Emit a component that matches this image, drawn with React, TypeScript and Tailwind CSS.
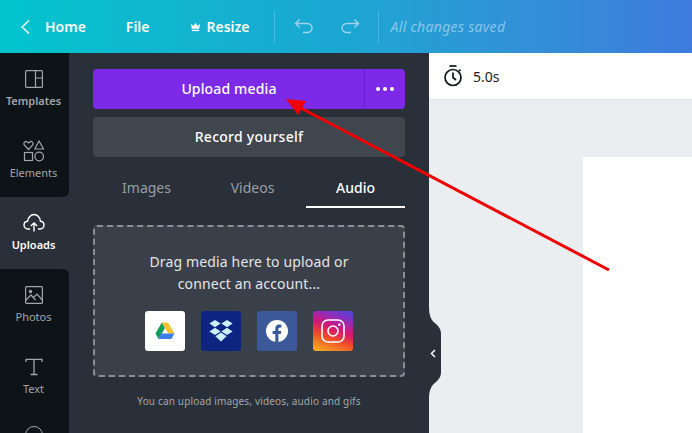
import { ReactNode } from "react";

const font = { fontFamily: '"Noto Sans", "Open Sans", sans-serif' };

function SideItem({ label, icon, active, className }: { label: string; icon: ReactNode; active?: boolean; className?: string }) {
  return (
    <div
      className={`h-[72px] w-[69px] shrink-0 flex flex-col items-center pr-[2px] ${
        active ? "bg-[#293039] text-white font-semibold" : "text-[#a3a6a9]"
      } ${className ?? "pt-[15px]"}`}
    >
      <div className="h-[22px] w-[24px] flex items-center justify-center">{icon}</div>
      <span className="text-[11px] leading-[16px] mt-[3px]">{label}</span>
    </div>
  );
}

function Tab({ label, active, width }: { label: string; active?: boolean; width: string }) {
  return (
    <div
      className={`${width} h-[39px] flex items-center justify-center text-[14px] ${
        active ? "pb-[1px] text-white font-medium border-b-2 border-white" : "pb-[3px] text-[#9a9ea4]"
      }`}
    >
      {label}
    </div>
  );
}

export default function App() {
  return (
    <div className="relative w-[692px] h-[433px] overflow-hidden bg-[#ebeef1]" style={font}>
      {/* top bar */}
      <header className="h-[53px] flex items-center text-white text-[14px] font-semibold bg-gradient-to-r from-[#01c4cc] via-[#1ba6d2] to-[#3d7bdc]">
        <svg className="ml-[20px]" width="11" height="16" viewBox="0 0 11 16" fill="none" stroke="white" strokeWidth="1.4">
          <path d="M9 1.5 L2 8 L9 14.5" />
        </svg>
        <span className="ml-[14px]">Home</span>
        <span className="ml-[40px]">File</span>
        <svg className="ml-[40px]" width="11" height="10" viewBox="0 0 12 10" fill="white">
          <path d="M1 1.5 L3.5 4 L6 0.5 L8.5 4 L11 1.5 L10 7 H2 Z" />
          <rect x="2" y="8" width="8" height="1.5" />
        </svg>
        <span className="ml-[6px]">Resize</span>
        <div className="ml-[24px] w-px h-[32px] bg-white/20" />
        <svg className="ml-[19px]" width="20" height="18" viewBox="0 0 20 18" fill="none" stroke="#9fd3ec" strokeWidth="1.4">
          <path d="M5.5 1.5 L1.5 5.5 L5.5 9.5 M1.5 5.5 H13 C16 5.5 18 7.5 18 10 C18 12.5 16 14.5 13 14.5 H9" />
        </svg>
        <svg className="ml-[26px]" width="20" height="18" viewBox="0 0 20 18" fill="none" stroke="#9fd3ec" strokeWidth="1.4">
          <path d="M14.5 1.5 L18.5 5.5 L14.5 9.5 M18.5 5.5 H7 C4 5.5 2 7.5 2 10 C2 12.5 4 14.5 7 14.5 H11" />
        </svg>
        <div className="ml-[18px] w-px h-[32px] bg-white/20" />
        <span className="ml-[12px] text-[14px] font-normal italic tracking-[0.3px] text-white/45">All changes saved</span>
      </header>

      <div className="flex h-[380px]">
        {/* left rail */}
        <nav className="w-[69px] shrink-0 bg-[#293039] flex flex-col overflow-hidden">
          <div className="bg-[#0e1318] rounded-br-[6px] h-[144px] shrink-0">
            <SideItem
              label="Templates"
              className="font-semibold pt-[15px]"
              icon={
                <svg width="18" height="18" viewBox="0 0 18 18" fill="none" stroke="#a3a6a9" strokeWidth="1.2">
                  <rect x="0.6" y="0.6" width="16.8" height="16.8" rx="1" />
                  <path d="M10.5 0.6 V17.4 M10.5 8 H17.4" />
                </svg>
              }
            />
            <SideItem
              label="Elements"
              icon={
                <svg width="22" height="22" viewBox="0 0 22 22" fill="none" stroke="#a3a6a9" strokeWidth="1.2">
                  <path d="M5.5 9.5 L1.3 5 C0 3 2.5 0.5 4.2 2 L5.5 3 L6.8 2 C8.5 0.5 11 3 9.7 5 Z" />
                  <path d="M16 1 L20.5 9 H11.8 Z" />
                  <rect x="1.5" y="12.5" width="8" height="8" />
                  <circle cx="16.2" cy="16.5" r="4.3" />
                </svg>
              }
            />
          </div>
          <SideItem
            active
            label="Uploads"
            icon={
              <svg width="22" height="20" viewBox="0 0 22 20" fill="none" stroke="white" strokeWidth="1.4">
                <path d="M7 16 H5 C2.5 16 1 14 1 12 C1 10 2.5 8.5 4.5 8.3 C5 4.5 8 1.5 11 1.5 C14 1.5 17 4 17.5 8.3 C19.5 8.5 21 10 21 12 C21 14 19.5 16 17 16 H15" />
                <path d="M11 18.5 V10 M7.8 13 L11 10 L14.2 13" />
              </svg>
            }
          />
          <div className="bg-[#0e1318] rounded-tr-[6px] flex-1">
            <SideItem
              label="Photos"
              icon={
                <svg width="18" height="18" viewBox="0 0 18 18" fill="none" stroke="#a3a6a9" strokeWidth="1.2">
                  <rect x="0.6" y="0.6" width="16.8" height="16.8" rx="1" />
                  <circle cx="5.5" cy="5.5" r="1.1" fill="#a3a6a9" />
                  <path d="M0.6 14.5 L6 9 L10.5 14 M8.5 11.5 L12 8 L17.4 14" />
                </svg>
              }
            />
            <SideItem
              label="Text"
              icon={
                <svg width="18" height="18" viewBox="0 0 18 18" fill="none" stroke="#a3a6a9" strokeWidth="1.3">
                  <path d="M1 4 V1.3 H17 V4 M9 1.3 V16.5 M5.5 16.5 H12.5" />
                </svg>
              }
            />
            <div className="flex justify-center pr-[2px] pt-[13px]">
              <div className="w-[18px] h-[18px] rounded-full border border-[#a3a6a9]" />
            </div>
          </div>
        </nav>

        {/* panel */}
        <section className="w-[360px] shrink-0 bg-[#293039] px-[24px] pt-[16px] flex flex-col relative">
          <div className="h-[40px] flex rounded-[4px] bg-[#7d2ae8] text-white text-[14px] font-medium tracking-[0.15px]">
            <div className="flex-1 flex items-center justify-center pb-[2px] pl-[1px] border-r border-[#6a21c9]">Upload media</div>
            <div className="w-[40px] flex items-center justify-center gap-[3px]">
              <span className="w-[4px] h-[4px] rounded-full bg-white" />
              <span className="w-[4px] h-[4px] rounded-full bg-white" />
              <span className="w-[4px] h-[4px] rounded-full bg-white" />
            </div>
          </div>
          <div className="mt-[8px] h-[40px] pb-[2px] rounded-[4px] bg-[#3f464e] text-white text-[14px] font-medium tracking-[0.27px] flex items-center justify-center">
            Record yourself
          </div>
          <div className="mt-[12px] flex">
            <Tab label="Images" width="w-[107px]" />
            <Tab label="Videos" width="w-[106px] pr-[1px]" />
            <Tab label="Audio" active width="w-[99px]" />
          </div>
          <div className="mt-[17px] h-[152px] rounded-[4px] bg-[#3a4049] border-2 border-dashed border-[#8b8f94] flex flex-col items-center pt-[24px]">
            <p className="text-[14px] leading-[22px] tracking-[0.15px] text-[#e4e6e8] text-center">
              Drag media here to upload or
              <br />
              connect an account...
            </p>
            <div className="mt-[16px] flex gap-[16px]">
              <div className="w-[40px] h-[40px] rounded-[3px] bg-white flex items-center justify-center">
                <svg width="20" height="18" viewBox="0 0 20 18">
                  <path d="M6.8 0.5 H13 L19.5 11.5 H13.2 Z" fill="#fbc02d" />
                  <path d="M6.8 0.5 L9.9 6 L3.6 17 L0.5 11.5 Z" fill="#0f9d58" />
                  <path d="M6 11.5 H19.5 L16.4 17 H3.6 Z" fill="#3d7ee8" />
                </svg>
              </div>
              <div className="w-[40px] h-[40px] rounded-[3px] bg-[#0d2481] flex items-center justify-center">
                <svg width="24" height="22" viewBox="0 0 24 22" fill="#cdeefd">
                  <path d="M6 0 L11.6 3.6 L6 7.2 L0.4 3.6 Z" />
                  <path d="M18 0 L23.6 3.6 L18 7.2 L12.4 3.6 Z" />
                  <path d="M6 7.8 L11.6 11.4 L6 15 L0.4 11.4 Z" />
                  <path d="M18 7.8 L23.6 11.4 L18 15 L12.4 11.4 Z" />
                  <path d="M12 12.6 L17.6 16.2 L12 21.5 L6.4 16.2 Z" />
                </svg>
              </div>
              <div className="w-[40px] h-[40px] rounded-[3px] bg-[#3b5998] flex items-center justify-center">
                <svg width="22" height="22" viewBox="0 0 22 22">
                  <circle cx="11" cy="11" r="11" fill="white" />
                  <path
                    d="M9.3 22 V14 H6.6 V11 H9.3 V8.6 C9.3 6 10.9 4.6 13.2 4.6 C14.3 4.6 15.4 4.8 15.4 4.8 V7.4 H14.1 C12.8 7.4 12.4 8.2 12.4 9 V11 H15.3 L14.8 14 H12.4 V22 Z"
                    fill="#3b5998"
                  />
                </svg>
              </div>
              <div className="w-[40px] h-[40px] rounded-[3px] bg-[linear-gradient(20deg,#f9a825_5%,#ef4a2a_35%,#d6176f_55%,#8a2fc0_80%,#4a45d8_100%)] flex items-center justify-center">
                <svg width="24" height="24" viewBox="0 0 24 24" fill="none" stroke="white" strokeWidth="1.6">
                  <rect x="1" y="1" width="22" height="22" rx="6" />
                  <circle cx="12" cy="12" r="5" />
                  <circle cx="18.3" cy="5.7" r="1.2" fill="white" stroke="none" />
                </svg>
              </div>
            </div>
          </div>
          <p className="mt-[17px] text-[10px] leading-[14px] tracking-[0.16px] text-[#a3a6a9] text-center">
            You can upload images, videos, audio and gifs
          </p>
        </section>

        {/* canvas */}
        <main className="flex-1 flex flex-col min-w-0">
          <div className="h-[47px] bg-white border-b border-[#e2e4e7] flex items-center pl-[14px] text-[14px] text-[#1b2128]">
            <svg width="20" height="22" viewBox="0 0 20 22" fill="none" stroke="#0e1318" strokeWidth="1.7">
              <path d="M6.5 1 H13.5" />
              <circle cx="10" cy="12.5" r="8" />
              <path d="M10 7.5 V12.5 L13 15 M16 4.5 L17.5 6" />
            </svg>
            <span className="ml-[10px]">5.0s</span>
          </div>
          <div className="flex-1 pl-[154px] pt-[57px]">
            <div className="w-full h-full bg-white" />
          </div>
        </main>
      </div>

      {/* panel collapse handle */}
      <div className="absolute left-[429px] top-[307px] w-[12px] h-[92px]">
        <svg className="absolute inset-0" width="12" height="92" viewBox="0 0 12 92" fill="#293039">
          <path d="M0 0 C0 10 3 14 7 17 C10 20 12 22 12 27 V65 C12 70 10 72 7 75 C3 78 0 82 0 92 Z" />
        </svg>
        <svg className="absolute left-[1px] top-[42px]" width="6" height="9" viewBox="0 0 6 9" fill="none" stroke="white" strokeWidth="1.5">
          <path d="M5 1 L1.5 4.5 L5 8" />
        </svg>
      </div>

      {/* annotation arrow */}
      <svg className="absolute inset-0 pointer-events-none" width="692" height="433" viewBox="0 0 692 433">
        <path d="M609 270 L297 106" stroke="#f00000" strokeWidth="3" fill="none" />
        <path d="M286 99 L306 101 L298 115 Z" fill="#f00000" />
      </svg>
    </div>
  );
}
